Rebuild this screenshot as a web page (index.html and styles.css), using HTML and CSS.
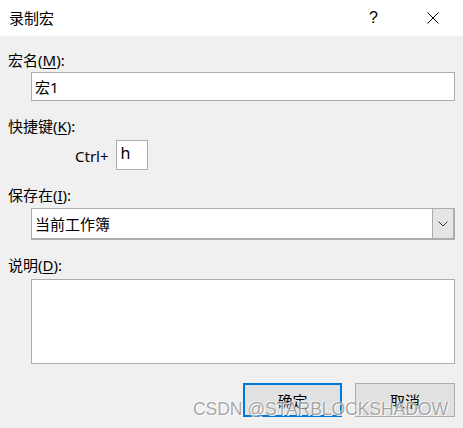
FILE: index.html
```html
<!DOCTYPE html>
<html lang="zh">
<head>
<meta charset="utf-8">
<title>录制宏</title>
<link rel="stylesheet" href="styles.css">
</head>
<body>
<div class="dialog">
  <div class="titlebar">
    <span class="title">录制宏</span>
    <span class="help">?</span>
    <svg class="close" width="12" height="12" viewBox="0 0 12 12"><path d="M0.5 0.5L11.5 11.5M11.5 0.5L0.5 11.5" stroke="#000" stroke-width="1" fill="none"/></svg>
  </div>
  <div class="content">
    <div class="label l1">宏名(<u>M</u>):</div>
    <div class="field f1"><span class="val">宏1</span></div>
    <div class="label l2">快捷键(<u>K</u>):</div>
    <div class="ctrlrow">
      <span class="ctrl">Ctrl+</span>
      <div class="keybox"><span>h</span></div>
    </div>
    <div class="label l3">保存在(<u>I</u>):</div>
    <div class="select">
      <span class="val">当前工作簿</span>
      <div class="drop"><svg width="10" height="6" viewBox="0 0 10 6"><path d="M0.5 0.5L5 5L9.5 0.5" stroke="#333" stroke-width="1" fill="none"/></svg></div>
    </div>
    <div class="label l4">说明(<u>D</u>):</div>
    <div class="textarea"></div>
    <div class="buttons">
      <div class="btn ok">确定</div>
      <div class="btn cancel">取消</div>
    </div>
  </div>
  <div class="watermark">CSDN @STARBLOCKSHADOW</div>
</div>
</body>
</html>
```
FILE: styles.css
```css
html, body {
  margin: 0;
  padding: 0;
}
body {
  width: 463px;
  height: 428px;
  overflow: hidden;
  background: #f0f0f0;
  font-family: "Noto Sans", "Noto Sans CJK SC", sans-serif;
  font-size: 15px;
  color: #000;
}
.dialog {
  position: relative;
  width: 463px;
  height: 428px;
}
.titlebar {
  height: 36px;
  background: #fff;
  display: flex;
  align-items: center;
  padding-left: 9px;
}
.title {
  line-height: 36px;
  flex: 1;
}
.help {
  font-family: "Liberation Sans", sans-serif;
  font-size: 16px;
  margin-right: 49px;
  margin-top: -1px;
}
.close {
  margin-right: 24px;
}
.content {
  display: flex;
  flex-direction: column;
  padding: 0 8px 0 8px;
}
.label {
  height: 20px;
  line-height: 20px;
}
.label u {
  text-underline-offset: 2px;
}
.l1 { margin-top: 14px; }
.l2, .l3, .l4 { margin-top: 15px; }
.field, .select, .textarea {
  margin-left: 23px;
  background: #fff;
  border: 1px solid #adadad;
  box-sizing: border-box;
}
.field {
  margin-top: 2px;
  height: 29px;
  display: flex;
  align-items: center;
  padding-left: 3px;
}
.val {
  line-height: 20px;
}
.ctrlrow {
  margin-top: 4px;
  height: 30px;
  display: flex;
  align-items: center;
  padding-left: 67px;
}
.ctrl {
  margin-right: 7px;
  margin-top: 2px;
}
.keybox {
  width: 32px;
  height: 30px;
  box-sizing: border-box;
  border: 1px solid #adadad;
  background: #fff;
  padding-left: 4px;
  display: flex;
  align-items: center;
}
.keybox span {
  margin-top: -4px;
  font-size: 16px;
}
.select {
  margin-top: 3px;
  height: 32px;
  display: flex;
  align-items: center;
  padding-left: 3px;
  border-width: 1px 2px 2px 1px;
}
.select .val {
  flex: 1;
}
.drop {
  width: 20px;
  height: 100%;
  border-left: 1px solid #adadad;
  background: #e5e5e5;
  display: flex;
  align-items: center;
  justify-content: center;
}
.textarea {
  margin-top: 4px;
  height: 85px;
}
.buttons {
  margin-top: 19px;
  display: flex;
  justify-content: flex-end;
  gap: 13px;
}
.btn {
  width: 99px;
  height: 34px;
  box-sizing: border-box;
  background: #e1e1e1;
  border: 1px solid #adadad;
  display: flex;
  align-items: center;
  justify-content: center;
}
.btn.ok {
  border: 2px solid #0078d7;
}
.cancel {
  width: 100px;
}
.watermark {
  position: absolute;
  left: 193px;
  top: 399px;
  font-family: "Liberation Sans", sans-serif;
  font-size: 17.6px;
  letter-spacing: -0.1px;
  color: rgba(140, 140, 140, 0.75);
  text-shadow: 1px 1px 0 rgba(255,255,255,0.9), -1px -1px 0 rgba(255,255,255,0.6);
  white-space: nowrap;
}
```
